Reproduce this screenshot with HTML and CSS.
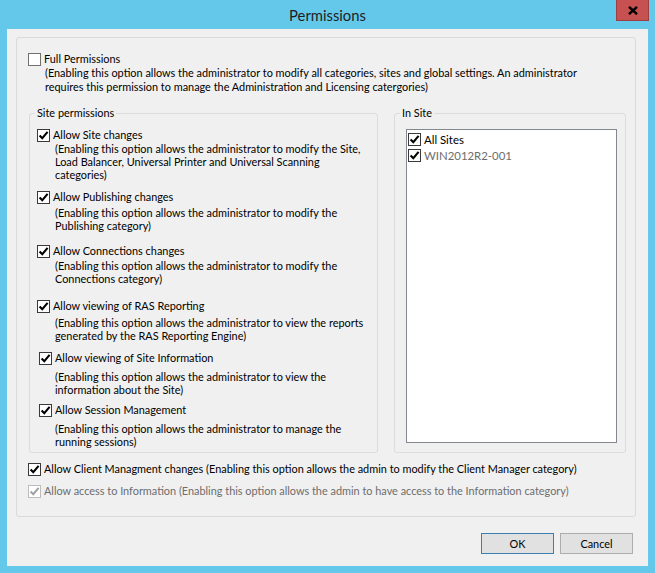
FILE: index.html
```html
<!DOCTYPE html>
<html lang="en">
<head>
<meta charset="utf-8">
<title>Permissions</title>
<link rel="stylesheet" href="styles.css">
</head>
<body>
<div class="window">
  <div class="titlebar">
    <span class="title">Permissions</span>
    <button class="close" type="button" aria-label="Close">
      <svg width="10" height="9" viewBox="0 0 10 9"><path d="M1 0.8 L9 8.2 M9 0.8 L1 8.2" /></svg>
    </button>
  </div>
  <div class="client">
    <div class="panel">
      <label class="opt-row">
        <span class="cb off"></span>
        <span class="lbl">Full Permissions</span>
      </label>
      <p class="desc desc-full">(Enabling this option allows the administrator to modify all categories, sites and global settings. An administrator<br>requires this permission to manage the Administration and Licensing catergories)</p>

      <div class="groups">
        <fieldset class="group group-site">
          <legend>Site permissions</legend>
          <div class="site-list">
            <div class="opt">
              <label class="opt-row"><span class="cb on"><svg viewBox="0 0 11 11"><path d="M1.6 5.4 L4.3 8.2 L9.6 1.9"/></svg></span><span class="lbl">Allow Site changes</span></label>
              <p class="desc">(Enabling this option allows the administrator to modify the Site,<br>Load Balancer, Universal Printer and Universal Scanning<br>categories)</p>
            </div>
            <div class="opt">
              <label class="opt-row"><span class="cb on"><svg viewBox="0 0 11 11"><path d="M1.6 5.4 L4.3 8.2 L9.6 1.9"/></svg></span><span class="lbl">Allow Publishing changes</span></label>
              <p class="desc">(Enabling this option allows the administrator to modify the<br>Publishing category)</p>
            </div>
            <div class="opt">
              <label class="opt-row"><span class="cb on"><svg viewBox="0 0 11 11"><path d="M1.6 5.4 L4.3 8.2 L9.6 1.9"/></svg></span><span class="lbl">Allow Connections changes</span></label>
              <p class="desc">(Enabling this option allows the administrator to modify the<br>Connections category)</p>
            </div>
            <div class="opt">
              <label class="opt-row"><span class="cb on"><svg viewBox="0 0 11 11"><path d="M1.6 5.4 L4.3 8.2 L9.6 1.9"/></svg></span><span class="lbl">Allow viewing of RAS Reporting</span></label>
              <p class="desc">(Enabling this option allows the administrator to view the reports<br>generated by the RAS Reporting Engine)</p>
            </div>
            <div class="opt opt-shift">
              <label class="opt-row"><span class="cb on"><svg viewBox="0 0 11 11"><path d="M1.6 5.4 L4.3 8.2 L9.6 1.9"/></svg></span><span class="lbl">Allow viewing of Site Information</span></label>
              <p class="desc">(Enabling this option allows the administrator to view the<br>information about the Site)</p>
            </div>
            <div class="opt opt-shift">
              <label class="opt-row"><span class="cb on"><svg viewBox="0 0 11 11"><path d="M1.6 5.4 L4.3 8.2 L9.6 1.9"/></svg></span><span class="lbl">Allow Session Management</span></label>
              <p class="desc">(Enabling this option allows the administrator to manage the<br>running sessions)</p>
            </div>
          </div>
        </fieldset>

        <fieldset class="group group-in">
          <legend>In Site</legend>
          <div class="listbox">
            <div class="list-item"><span class="cb on"><svg viewBox="0 0 11 11"><path d="M1.6 5.4 L4.3 8.2 L9.6 1.9"/></svg></span><span>All Sites</span></div>
            <div class="list-item list-item-dim"><span class="cb on"><svg viewBox="0 0 11 11"><path d="M1.6 5.4 L4.3 8.2 L9.6 1.9"/></svg></span><span>WIN2012R2-001</span></div>
          </div>
        </fieldset>
      </div>

      <label class="opt-row row-client"><span class="cb on"><svg viewBox="0 0 11 11"><path d="M1.6 5.4 L4.3 8.2 L9.6 1.9"/></svg></span><span class="lbl">Allow Client Managment changes (Enabling this option allows the admin to modify the Client Manager category)</span></label>
      <label class="opt-row row-access disabled"><span class="cb on"><svg viewBox="0 0 11 11"><path d="M1.6 5.4 L4.3 8.2 L9.6 1.9"/></svg></span><span class="lbl">Allow access to Information (Enabling this option allows the admin to have access to the Information category)</span></label>
    </div>

    <div class="buttons">
      <button class="btn btn-default" type="button">OK</button>
      <button class="btn" type="button">Cancel</button>
    </div>
  </div>
</div>
</body>
</html>
```
FILE: styles.css
```css
* { box-sizing: border-box; }

html, body {
  margin: 0;
  padding: 0;
}

body {
  width: 655px;
  height: 573px;
  overflow: hidden;
  background: #64c8ea;
  font-family: "Lato", "Liberation Sans", sans-serif;
  font-size: 10.9px;
  color: #000;
}

.window {
  position: relative;
  width: 655px;
  height: 573px;
}

.titlebar {
  height: 29px;
  display: flex;
  justify-content: center;
  align-items: flex-start;
  padding-top: 6px;
}

.title {
  font-size: 14.8px;
  line-height: 18px;
  color: #1e1e1e;
}

.close {
  position: absolute;
  top: 0;
  right: 6px;
  width: 33px;
  height: 21px;
  margin: 0;
  padding: 0;
  background: #c75050;
  border: 1px solid #9b4040;
  border-top: none;
  display: flex;
  align-items: center;
  justify-content: center;
}

.close svg path {
  stroke: #000;
  stroke-width: 2.4;
  fill: none;
}

.client {
  margin: 0 7px;
  width: 641px;
  height: 537px;
  background: #f0f0f0;
  display: flex;
  flex-direction: column;
}

.panel {
  margin: 8px 0 0 9px;
  width: 620px;
  height: 480px;
  border: 1px solid #dadada;
  border-radius: 3px;
  padding: 14px 0 0 11px;
}

.opt-row {
  display: flex;
  align-items: center;
  height: 14px;
  line-height: 14px;
  white-space: nowrap;
}

.cb {
  flex: none;
  width: 13px;
  height: 13px;
  border: 1px solid #3a3a3a;
  background: #fff;
  margin-right: 3px;
  display: flex;
  align-items: center;
  justify-content: center;
}

.cb.off {
  border-color: #707070;
}

.cb svg {
  width: 11px;
  height: 11px;
}

.cb svg path {
  fill: none;
  stroke: #000;
  stroke-width: 2.1;
  stroke-linecap: butt;
  stroke-linejoin: miter;
}

.desc {
  margin: 0 0 0 18px;
  line-height: 13px;
  white-space: nowrap;
}

.desc-full {
  margin-left: 17px;
  line-height: 14px;
}

.groups {
  display: flex;
  gap: 16px;
  margin: 12px 0 0 1px;
}

.group {
  margin: 0;
  padding: 0;
  min-width: 0;
  border: 1px solid #dcdcdc;
  border-radius: 3px;
}

.group legend {
  margin-left: 5px;
  padding: 0 2px;
  font-size: 10.9px;
  line-height: 14px;
}

.group-site {
  width: 349px;
}

.group-in {
  width: 232px;
}

.site-list {
  padding: 8px 0 4px 7px;
}

.opt:nth-child(2) { margin-top: 9px; }
.opt:nth-child(3) { margin-top: 12px; }
.opt:nth-child(4) { margin-top: 14px; }
.opt:nth-child(5) { margin-top: 9px; }
.opt:nth-child(6) { margin-top: 7px; }

.opt:nth-child(2) .desc { margin-top: 2px; }
.opt:nth-child(3) .desc { margin-top: 1px; }
.opt:nth-child(4) .desc { margin-top: 3px; }
.opt:nth-child(5) .desc { margin-top: 5px; }
.opt:nth-child(6) .desc { margin-top: 5px; }

.opt-shift .opt-row {
  margin-left: 2px;
}

.listbox {
  margin: 9px 0 0 11px;
  width: 211px;
  height: 314px;
  border: 1px solid #828790;
  background: #fff;
  padding: 1px 0 0 1px;
}

.list-item {
  display: flex;
  align-items: center;
  height: 16px;
  white-space: nowrap;
  font-size: 11.4px;
}

.list-item .cb {
  margin-right: 3px;
}

.list-item-dim {
  color: #6d6d6d;
}

.row-client {
  margin-top: 9px;
}

.row-access {
  margin-top: 8px;
}

.disabled {
  color: #6d6d6d;
}

.disabled .cb {
  border-color: #bcbcbc;
}

.disabled .cb svg path {
  stroke: #a3a3a3;
}

.buttons {
  display: flex;
  justify-content: flex-end;
  gap: 6px;
  margin-top: 16px;
  padding-right: 15px;
}

.btn {
  width: 73px;
  height: 21px;
  margin: 0;
  padding: 0;
  background: #e1e1e1;
  border: 1px solid #adadad;
  font-family: "Lato", "Liberation Sans", sans-serif;
  font-size: 10.9px;
  color: #000;
}

.btn-default {
  border-color: #3c7fb1;
}
```
